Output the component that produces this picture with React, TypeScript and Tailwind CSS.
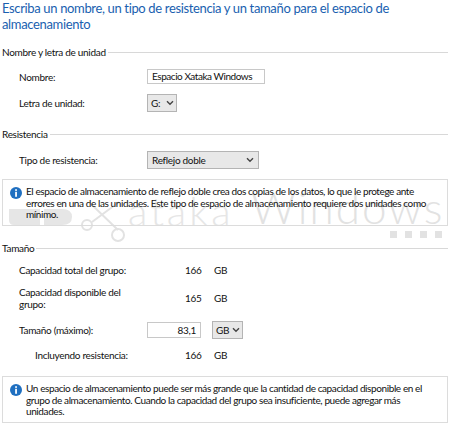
import React from 'react';

const font = { fontFamily: 'Lato, "Noto Sans", sans-serif' };

const Info: React.FC<{ children: React.ReactNode; className?: string }> = ({ children, className = '' }) => (
  <div className={`relative flex gap-[4px] border border-[#dcdcdc] pl-[7px] pt-[6px] ml-[2px] mr-[2px] ${className}`}>
    <svg width="12" height="12" viewBox="0 0 13 13" className="shrink-0 mt-[1px]">
      <circle cx="6.5" cy="6.5" r="6.5" fill="#1f6fc0" />
      <rect x="5.6" y="2.4" width="1.9" height="1.8" fill="#fff" />
      <rect x="5.6" y="5.2" width="1.9" height="5.4" fill="#fff" />
    </svg>
    <p className="text-[10px] leading-[11.5px] text-[#111] tracking-[-0.4px] whitespace-nowrap">{children}</p>
  </div>
);

const Section: React.FC<{ title: string }> = ({ title }) => (
  <div className="flex items-center gap-[2px] pl-[2px] pr-[2px] text-[10px] leading-[14px] text-[#111] tracking-[-0.3px]">
    <span>{title}</span>
    <div className="h-px flex-1 bg-[#d8d8d8]" />
  </div>
);

const Label: React.FC<{ children: React.ReactNode; className?: string }> = ({ children, className = '' }) => (
  <div className={`text-[10px] leading-[12px] text-[#111] tracking-[-0.3px] ${className}`}>{children}</div>
);

const Chevron = () => (
  <svg width="8" height="6" viewBox="0 0 8 6" fill="none" stroke="#444" strokeWidth="1.4">
    <path d="M1 1.2 L4 4.2 L7 1.2" />
  </svg>
);

const Select: React.FC<{ value: string; className: string }> = ({ value, className }) => (
  <div className={`flex items-center justify-between border border-[#b4b4b4] bg-[#e8e8e8] text-[10px] text-[#111] tracking-[-0.3px] ${className}`}>
    <span>{value}</span>
    <Chevron />
  </div>
);

// faded site watermark behind the form
const Watermark = () => (
  <>
    <svg width="130" height="50" viewBox="0 0 130 50" fill="none" className="absolute left-0 top-[197px]">
      <path d="M9 12 H40 V28 H14 Q9 28 9 23 Z" fill="#e6e6e6" />
      <path d="M44 12 H62 Q72 12 72 20 Q72 28 62 28 H44 Z" fill="#e6e6e6" />
      <g stroke="#e2e2e2" strokeWidth="2">
        <path d="M90 6 L118 33" />
        <path d="M119 5 L92 25" />
        <circle cx="87" cy="28" r="5" />
        <circle cx="118" cy="38" r="6" />
      </g>
    </svg>
    <div className="absolute left-[128px] top-[187px] text-[40px] leading-[48px] font-light text-[#e6e6e6] tracking-[3px]">
      ataka
    </div>
    <div className="absolute left-[251px] top-[177px] text-[44px] leading-[60px] font-light text-[#e2e2e2] tracking-[2px]">
      Windows
    </div>
    <div className="absolute left-[390px] top-[231px] flex gap-[8px]">
      <div className="w-[7px] h-[7px] bg-[#e2e2e2]" />
      <div className="w-[7px] h-[7px] bg-[#e2e2e2]" />
      <div className="w-[7px] h-[7px] bg-[#e2e2e2]" />
      <div className="w-[7px] h-[7px] bg-[#e2e2e2]" />
    </div>
  </>
);

export default function App() {
  return (
    <div className="relative w-[450px] h-[424px] overflow-hidden bg-white" style={font}>
      <Watermark />

      <div className="relative flex flex-col">
        <h1 className="pl-[2px] text-[13px] leading-[16px] text-[#1a5fb0] tracking-[-0.35px] whitespace-nowrap">
          Escriba un nombre, un tipo de resistencia y un tamaño para el espacio de
          <br />
          almacenamiento
        </h1>

        <div className="mt-[13px]"><Section title="Nombre y letra de unidad" /></div>
        <div className="mt-[10px] flex items-center pl-[19px]">
          <Label className="w-[128px]">Nombre:</Label>
          <div className="flex h-[15px] w-[118px] items-center border border-[#c8c8c8] pl-[4px] text-[10px] text-[#111] tracking-[-0.45px] whitespace-nowrap">
            Espacio Xataka Windows
          </div>
        </div>
        <div className="mt-[10px] flex items-center pl-[19px]">
          <Label className="w-[128px]">Letra de unidad:</Label>
          <Select value="G:" className="h-[18px] w-[30px] pl-[3px] pr-[2px]" />
        </div>

        <div className="mt-[15px]"><Section title="Resistencia" /></div>
        <div className="mt-[10px] flex items-center pl-[19px]">
          <Label className="w-[128px]">Tipo de resistencia:</Label>
          <Select value="Reflejo doble" className="h-[18px] w-[112px] pl-[4px] pr-[4px]" />
        </div>

        <Info className="mt-[10px] h-[47px]">
          El espacio de almacenamiento de reflejo doble crea dos copias de los datos, lo que le protege ante
          <br />
          errores en una de las unidades. Este tipo de espacio de almacenamiento requiere dos unidades como
          <br />
          mínimo.
        </Info>

        <div className="mt-[15px]"><Section title="Tamaño" /></div>
        <div className="mt-[9px] flex items-center pl-[19px]">
          <Label className="w-[166px]">Capacidad total del grupo:</Label>
          <Label className="w-[29px]">166</Label>
          <Label>GB</Label>
        </div>
        <div className="mt-[10px] flex items-center pl-[19px]">
          <Label className="w-[166px] pr-[40px]">Capacidad disponible del grupo:</Label>
          <Label className="w-[29px]">165</Label>
          <Label>GB</Label>
        </div>
        <div className="mt-[11px] flex items-center pl-[19px]">
          <Label className="w-[128px]">Tamaño (máximo):</Label>
          <div className="flex h-[16px] w-[54px] items-center justify-end border border-[#c8c8c8] pr-[4px] text-[10px] text-[#111] tracking-[-0.3px]">
            83,1
          </div>
          <Select value="GB" className="ml-[11px] h-[18px] w-[31px] pl-[3px] pr-[2px]" />
        </div>
        <div className="mt-[10px] flex items-center pl-[35px]">
          <Label className="w-[150px]">Incluyendo resistencia:</Label>
          <Label className="w-[29px]">166</Label>
          <Label>GB</Label>
        </div>

        <Info className="mt-[15px] h-[47px]">
          Un espacio de almacenamiento puede ser más grande que la cantidad de capacidad disponible en el
          <br />
          grupo de almacenamiento. Cuando la capacidad del grupo sea insuficiente, puede agregar más
          <br />
          unidades.
        </Info>
      </div>
    </div>
  );
}
